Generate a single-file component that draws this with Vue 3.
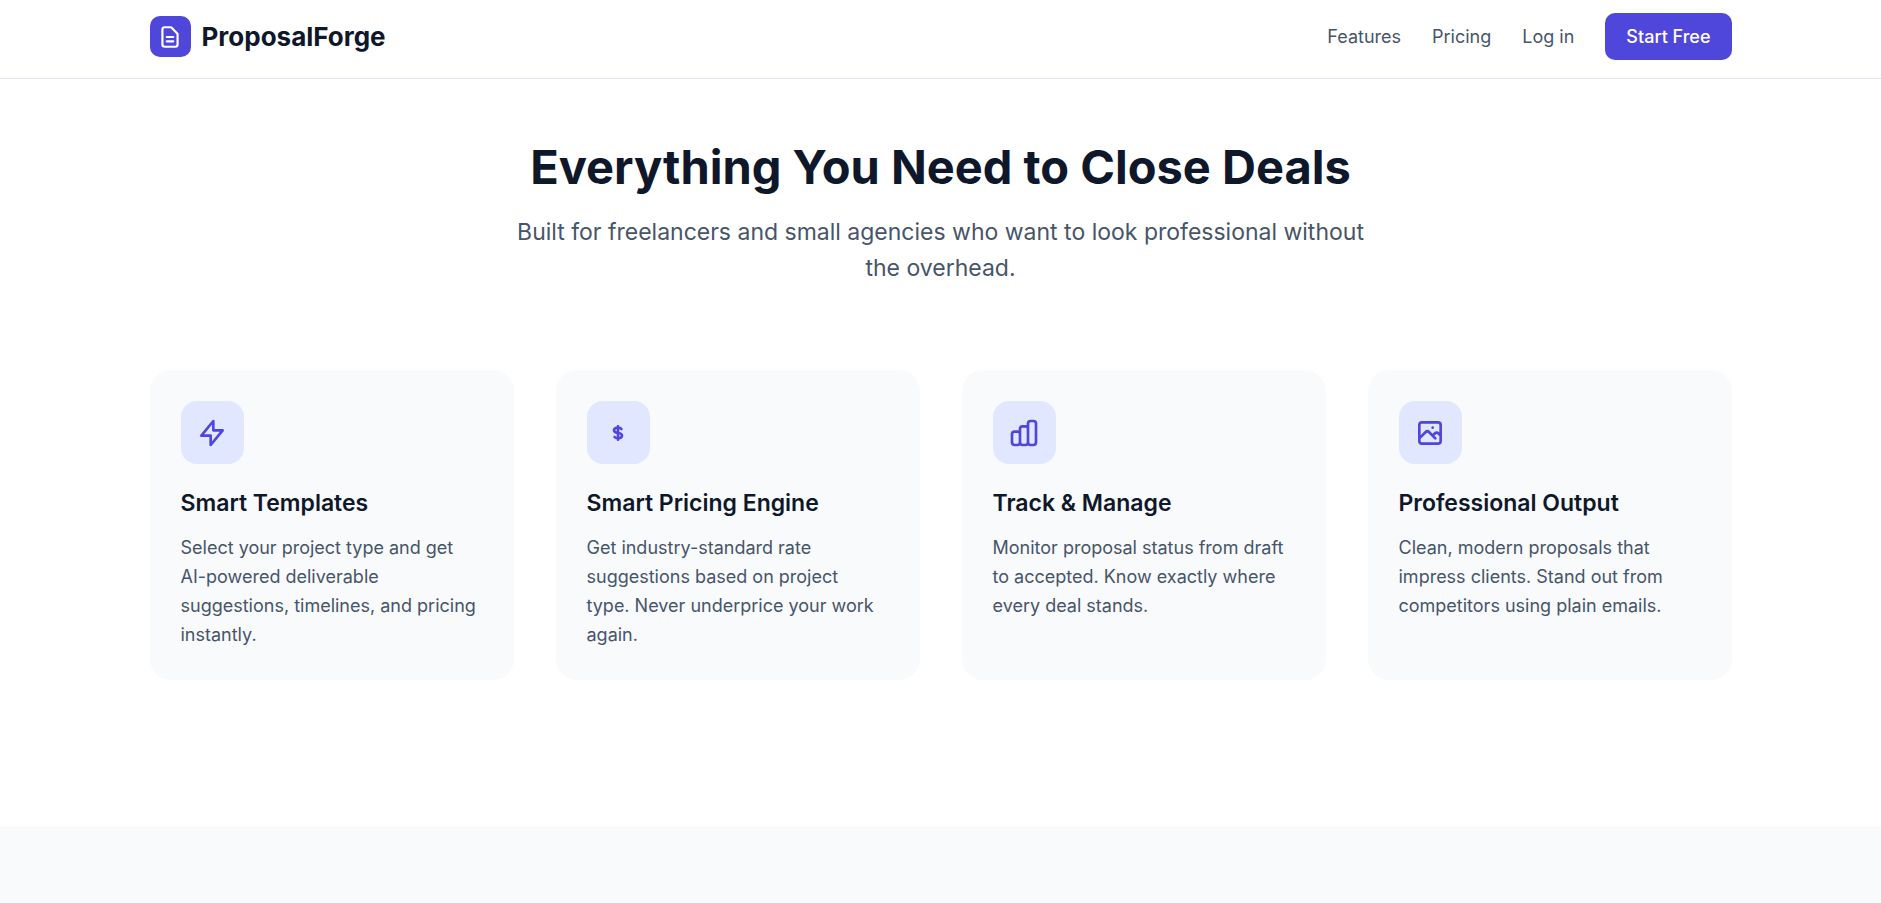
<template>
  <div class="page">
    <header class="header">
      <div class="container header__inner">
        <a href="#" class="logo">
          <span class="logo__mark">
            <svg viewBox="0 0 24 24" aria-hidden="true">
              <path
                d="M9 12h6m-6 4h6m2 5H7a2 2 0 01-2-2V5a2 2 0 012-2h5.586a1 1 0 01.707.293l5.414 5.414a1 1 0 01.293.707V19a2 2 0 01-2 2z"
              />
            </svg>
          </span>
          <span class="logo__name">ProposalForge</span>
        </a>
        <nav class="nav">
          <a v-for="link in links" :key="link.label" :href="link.href" class="nav__link">{{ link.label }}</a>
          <a href="#signup" class="nav__cta">Start Free</a>
        </nav>
      </div>
    </header>

    <main>
      <section id="features" class="features">
        <div class="container">
          <div class="intro">
            <h2 class="intro__title">Everything You Need to Close Deals</h2>
            <p class="intro__text">
              Built for freelancers and small agencies who want to look professional without the overhead.
            </p>
          </div>

          <div class="grid">
            <article v-for="feature in features" :key="feature.title" class="card">
              <div class="card__icon">
                <svg viewBox="0 0 24 24" aria-hidden="true">
                  <path :d="feature.icon" />
                </svg>
              </div>
              <h3 class="card__title">{{ feature.title }}</h3>
              <p class="card__text">{{ feature.text }}</p>
            </article>
          </div>
        </div>
      </section>

      <!-- Next section, only its background so far -->
      <section id="pricing" class="pricing" />
    </main>
  </div>
</template>

<script setup>
const links = [
  { label: 'Features', href: '#features' },
  { label: 'Pricing', href: '#pricing' },
  { label: 'Log in', href: '#login' },
]

const features = [
  {
    title: 'Smart Templates',
    text: 'Select your project type and get AI-powered deliverable suggestions, timelines, and pricing instantly.',
    icon: 'M13 10V3L4 14h7v7l9-11h-7z',
  },
  {
    title: 'Smart Pricing Engine',
    text: 'Get industry-standard rate suggestions based on project type. Never underprice your work again.',
    icon: 'M12 8c-1.657 0-3 .895-3 2s1.343 2 3 2 3 .895 3 2-1.343 2-3 2m0-8c1.11 0 2.08.402 2.599 1M12 8V7m0 1v8m0 0v1m0-1c-1.11 0-2.08-.402-2.599-1',
  },
  {
    title: 'Track & Manage',
    text: 'Monitor proposal status from draft to accepted. Know exactly where every deal stands.',
    icon: 'M9 19v-6a2 2 0 00-2-2H5a2 2 0 00-2 2v6a2 2 0 002 2h2a2 2 0 002-2zm0 0V9a2 2 0 012-2h2a2 2 0 012 2v10m-6 0a2 2 0 002 2h2a2 2 0 002-2m0 0V5a2 2 0 012-2h2a2 2 0 012 2v14a2 2 0 01-2 2h-2a2 2 0 01-2-2z',
  },
  {
    title: 'Professional Output',
    text: 'Clean, modern proposals that impress clients. Stand out from competitors using plain emails.',
    icon: 'M4 16l4.586-4.586a2 2 0 012.828 0L16 16m-2-2l1.586-1.586a2 2 0 012.828 0L20 14m-6-6h.01M6 20h12a2 2 0 002-2V6a2 2 0 00-2-2H6a2 2 0 00-2 2v12a2 2 0 002 2z',
  },
]
</script>

<style>
body {
  margin: 0;
  background: #ffffff;
}
</style>

<style scoped>
.page {
  display: flex;
  flex-direction: column;
  min-height: 100vh;
  font-family: Inter, 'Liberation Sans', sans-serif;
  color: #0f172a;
}

main {
  display: flex;
  flex: 1;
  flex-direction: column;
}

.container {
  box-sizing: border-box;
  max-width: 1646px;
  margin: 0 auto;
  padding: 0 32px;
}

svg {
  fill: none;
  stroke: currentColor;
  stroke-width: 2;
  stroke-linecap: round;
  stroke-linejoin: round;
}

/* Header */
.header {
  border-bottom: 1px solid #e2e8f0;
}

.header__inner {
  display: flex;
  align-items: center;
  justify-content: space-between;
  padding-top: 13px;
  padding-bottom: 18px;
}

.logo {
  display: flex;
  align-items: center;
  gap: 11px;
  color: #0f172a;
  text-decoration: none;
}

.logo__mark {
  display: flex;
  align-items: center;
  justify-content: center;
  width: 41px;
  height: 41px;
  border-radius: 10px;
  background: #4f46dc;
  color: #ffffff;
}

.logo__mark svg {
  width: 26px;
  height: 26px;
}

.logo__name {
  font-size: 26px;
  font-weight: 700;
  line-height: 36px;
}

.nav {
  display: flex;
  align-items: center;
  gap: 31px;
  font-size: 18px;
  line-height: 27px;
}

.nav__link {
  color: #475569;
  text-decoration: none;
}

.nav__cta {
  padding: 10px 21px;
  border-radius: 10px;
  background: #4f46dc;
  color: #ffffff;
  font-weight: 500;
  text-decoration: none;
}

/* Features */
.features {
  padding: 58px 0 146px;
}

.intro {
  max-width: 872px;
  margin: 0 auto 84px;
  text-align: center;
}

.intro__title {
  margin: 0 0 18px;
  font-size: 47px;
  font-weight: 700;
  line-height: 59px;
}

.intro__text {
  margin: 0;
  color: #475569;
  font-size: 23px;
  line-height: 36px;
}

.grid {
  display: grid;
  grid-template-columns: repeat(4, 1fr);
  gap: 42px;
}

.card {
  padding: 31px;
  border-radius: 21px;
  background: #f8fafc;
}

.card__icon {
  display: flex;
  align-items: center;
  justify-content: center;
  width: 63px;
  height: 63px;
  margin-bottom: 21px;
  border-radius: 16px;
  background: #e0e7ff;
  color: #4f46dc;
}

.card__icon svg {
  width: 32px;
  height: 32px;
}

.card__title {
  margin: 0 0 12px;
  font-size: 23px;
  font-weight: 600;
  line-height: 36px;
}

.card__text {
  margin: 0;
  padding-right: 4px;
  color: #475569;
  font-size: 18px;
  line-height: 29px;
}

.pricing {
  flex: 1;
  background: #f8fafc;
}
</style>
